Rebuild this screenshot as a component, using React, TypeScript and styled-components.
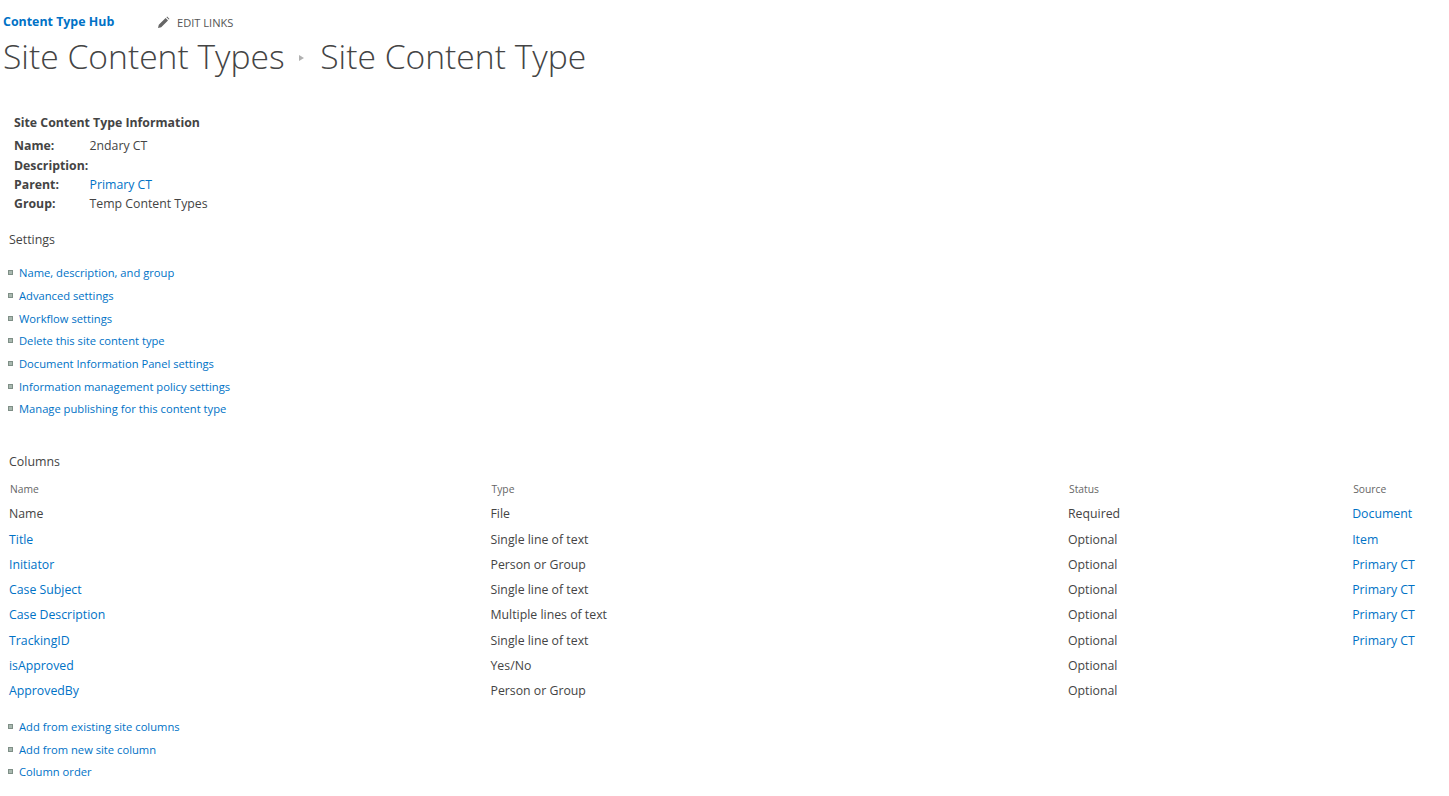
import React from 'react';
import styled, { createGlobalStyle } from 'styled-components';

const settingsLinks = [
  'Name, description, and group',
  'Advanced settings',
  'Workflow settings',
  'Delete this site content type',
  'Document Information Panel settings',
  'Information management policy settings',
  'Manage publishing for this content type',
];

const columnLinks = ['Add from existing site columns', 'Add from new site column', 'Column order'];

const rows = [
  { name: 'Name', type: 'File', status: 'Required', source: 'Document', plain: true },
  { name: 'Title', type: 'Single line of text', status: 'Optional', source: 'Item' },
  { name: 'Initiator', type: 'Person or Group', status: 'Optional', source: 'Primary CT' },
  { name: 'Case Subject', type: 'Single line of text', status: 'Optional', source: 'Primary CT' },
  { name: 'Case Description', type: 'Multiple lines of text', status: 'Optional', source: 'Primary CT' },
  { name: 'TrackingID', type: 'Single line of text', status: 'Optional', source: 'Primary CT' },
  { name: 'isApproved', type: 'Yes/No', status: 'Optional', source: '' },
  { name: 'ApprovedBy', type: 'Person or Group', status: 'Optional', source: '' },
];

const GlobalStyle = createGlobalStyle`
  html, body {
    margin: 0;
    background: #fff;
    font-family: 'Open Sans', 'Liberation Sans', sans-serif;
    color: #444;
  }
`;

const Page = styled.div`
  width: 1449px;
  height: 796px;
  overflow: hidden;
`;

const Header = styled.header`
  padding: 12px 0 0 3px;
`;

const TopRow = styled.div`
  display: flex;
  align-items: center;
  height: 19px;
`;

const HubLink = styled.a`
  font-size: 12.4px;
  font-weight: 700;
  color: #0072c6;
  width: 154px;
`;

const EditLinks = styled.span`
  display: flex;
  align-items: center;
  gap: 7px;
  font-size: 11.1px;
  color: #555;
  padding-top: 1px;
`;

const Title = styled.h1`
  display: flex;
  align-items: center;
  margin: 3px 0 0;
  height: 44px;
  font-size: 33.65px;
  font-weight: 300;
  font-family: 'Open Sans', sans-serif;
  color: #444;
`;

const Crumb = styled.span`
  margin: 3px 16px 0 14.5px;
  width: 0;
  height: 0;
  border-left: 5px solid #b1b1b1;
  border-top: 3px solid transparent;
  border-bottom: 3px solid transparent;
`;

const Info = styled.section`
  padding: 36px 0 0 14px;
`;

const InfoHeading = styled.div`
  font-size: 12.3px;
  font-weight: 700;
  height: 22.3px;
`;

const InfoRow = styled.div`
  display: grid;
  grid-template-columns: 75.5px 1fr;
  font-size: 12.3px;
  height: 19.2px;
  align-items: center;
`;

const InfoLabel = styled.span`
  font-weight: 700;
`;

const BlueLink = styled.a`
  color: #0072c6;
`;

const SectionTitle = styled.div<{ $top: number }>`
  margin: ${(p) => p.$top}px 0 0 9px;
  font-size: 12.4px;
  height: 18px;
`;

const LinkList = styled.ul<{ $top: number }>`
  list-style: none;
  margin: ${(p) => p.$top}px 0 0 8px;
  padding: 0;
`;

const LinkItem = styled.li`
  display: flex;
  align-items: center;
  gap: 6px;
  height: 22.67px;
  font-size: 11.2px;
  color: #0072c6;
`;

const Bullet = styled.span`
  width: 5px;
  height: 5px;
  background: #a9b9b0;
  border: 1px solid #7f8f87;
  box-sizing: border-box;
`;

const Table = styled.div`
  margin: 6px 0 0 9px;
  width: 1440px;
`;

const GridRow = styled.div<{ $head?: boolean }>`
  display: grid;
  grid-template-columns: 481.5px 577.5px 284.2px 1fr;
  align-items: center;
  height: ${(p) => (p.$head ? 24.5 : 25.3)}px;
  font-size: ${(p) => (p.$head ? 10.3 : 12.3)}px;
  color: ${(p) => (p.$head ? '#666' : '#444')};
`;

const HeadCell = styled.span`
  padding-left: 1px;
`;

export default function App() {
  return (
    <Page>
      <GlobalStyle />
      <Header>
        <TopRow>
          <HubLink>Content Type Hub</HubLink>
          <EditLinks>
            <svg width="13" height="13" viewBox="0 0 13 13" fill="#666">
              <path d="M1 12l.8-3.2L8.6 2l2.4 2.4-6.8 6.8L1 12zM9.4 1.2l.7-.7 2.4 2.4-.7.7z" />
            </svg>
            EDIT LINKS
          </EditLinks>
        </TopRow>
        <Title>
          Site Content Types
          <Crumb />
          Site Content Type
        </Title>
      </Header>
      <Info>
        <InfoHeading>Site Content Type Information</InfoHeading>
        <InfoRow><InfoLabel>Name:</InfoLabel><span>2ndary CT</span></InfoRow>
        <InfoRow><InfoLabel>Description:</InfoLabel><span /></InfoRow>
        <InfoRow><InfoLabel>Parent:</InfoLabel><BlueLink>Primary CT</BlueLink></InfoRow>
        <InfoRow><InfoLabel>Group:</InfoLabel><span>Temp Content Types</span></InfoRow>
      </Info>
      <SectionTitle $top={18}>Settings</SectionTitle>
      <LinkList $top={12.5}>
        {settingsLinks.map((l) => (
          <LinkItem key={l}><Bullet />{l}</LinkItem>
        ))}
      </LinkList>
      <SectionTitle $top={32.5}>Columns</SectionTitle>
      <Table>
        <GridRow $head>
          <HeadCell>Name</HeadCell><HeadCell>Type</HeadCell><HeadCell>Status</HeadCell><HeadCell>Source</HeadCell>
        </GridRow>
        {rows.map((r) => (
          <GridRow key={r.name}>
            {r.plain ? <span>{r.name}</span> : <BlueLink>{r.name}</BlueLink>}
            <span>{r.type}</span>
            <span>{r.status}</span>
            <BlueLink>{r.source}</BlueLink>
          </GridRow>
        ))}
      </Table>
      <LinkList $top={11.6}>
        {columnLinks.map((l) => (
          <LinkItem key={l}><Bullet />{l}</LinkItem>
        ))}
      </LinkList>
    </Page>
  );
}
